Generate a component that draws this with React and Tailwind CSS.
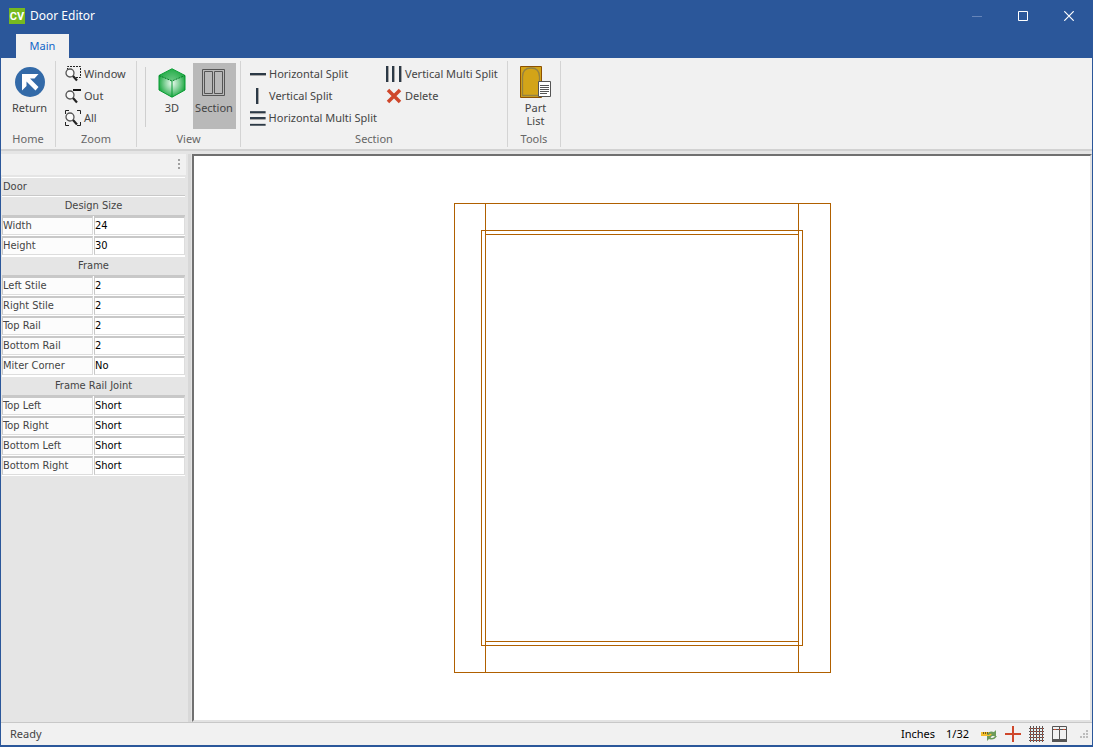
import React from "react";

const small = "flex h-[22px] items-center gap-[3px] whitespace-nowrap";

function Group({ name, className = "", children }) {
  return (
    <section aria-label={name} className={"flex flex-col border-r border-[#d4d4d4] " + className}>
      <div className="flex flex-1">{children}</div>
      <div className="h-4 text-center leading-4 text-[#666]">{name}</div>
    </section>
  );
}

function Glass({ kind }) {
  return (
    <svg width="16" height="16" viewBox="0 0 16 16" fill="none" aria-hidden="true">
      {kind === "window" && <path d="M2.500 4V.5H15.500V11.500H11" stroke="#222" strokeDasharray="2 1" />}
      {kind === "out" && <path d="M8 2H16" stroke="#111" strokeWidth="2" />}
      {kind === "all" && <path d="M.5 4V.5H4M12 .5H15.500V4M.5 12V15.500H4M12 15.500H15.500V12" stroke="#222" />}
      <circle cx="5" cy="7" r="4" fill="#fafafa" stroke="#555" strokeWidth="1.300" />
      <path d="M8 10L12 14.500" stroke="#222" strokeWidth="2.200" />
    </svg>
  );
}

function Bars({ kind }) {
  const h = kind === "h" ? [8] : [2, 8, 15];
  const v = kind === "v" ? [7] : [1, 7, 14];
  return (
    <svg width="16" height="16" viewBox="0 0 16 16" aria-hidden="true">
      {kind[0] === "h"
        ? h.map((y) => (
            <g key={y}>
              <rect x="0" y={y - 1} width="16" height="2" fill="#2c3946" />
              <rect x="0" y={y + 1} width="16" height="1" fill="#a5a5a5" />
            </g>
          ))
        : v.map((x) => (
            <g key={x}>
              <rect x={x - 1} y="0" width="2" height="16" fill="#2c3946" />
              <rect x={x + 1} y="0" width="1" height="16" fill="#a5a5a5" />
            </g>
          ))}
    </svg>
  );
}

function Heading({ children, first }) {
  return (
    <tr>
      <th
        colSpan="2"
        className={
          "border-t border-b border-t-white border-b-[#c8c8c8] bg-[#e5e5e5] p-0 font-normal text-[#444] " +
          (first ? "h-[19px] pl-px text-left" : "h-5 text-center")
        }
      >
        {children}
      </th>
    </tr>
  );
}

function Field({ label, value }) {
  const id = label.toLowerCase().replace(" ", "-");
  return (
    <tr>
      <td className="h-5 border-b border-white p-0">
        <label
          htmlFor={id}
          className="block h-[19px] border-t-2 border-r border-b border-l border-t-[#c8c8c8] border-r-[#ddd] border-b-[#ddd] border-l-[#c8c8c8] bg-[#fcfcfc] leading-4 whitespace-nowrap text-[#444]"
        >
          {label}
        </label>
      </td>
      <td className="h-5 border-b border-l border-white p-0">
        <input
          id={id}
          defaultValue={value}
          className="block h-[19px] w-full border-t-2 border-r border-b border-l border-t-[#c8c8c8] border-r-[#ddd] border-b-[#ddd] border-l-[#c8c8c8] bg-white pb-[2px] leading-[14px] text-black outline-none"
        />
      </td>
    </tr>
  );
}

export default function App() {
  return (
    <div className="flex h-screen flex-col border border-b-2 border-[#2b579a] bg-[#e5e5e5] font-['Noto_Sans',sans-serif] text-[11px] text-[#444]">
      <header className="shrink-0 bg-[#2b579a]">
        <div className="flex h-[33px] items-start text-white">
          <div className="flex h-[29px] flex-1 items-center gap-[5px] pl-2">
            <svg width="16" height="16" viewBox="0 0 16 16" aria-hidden="true">
              <rect width="16" height="16" fill="#77b91f" />
              <text x="8" y="12" fill="#fff" fontFamily="Roboto, sans-serif" fontWeight="700" fontSize="11" textAnchor="middle">CV</text>
            </svg>
            <h1 className="text-[12px]">Door Editor</h1>
          </div>
          <button aria-label="Minimize" className="flex h-[29px] w-[46px] items-center justify-center">
            <svg width="10" height="10"><path d="M0 5.500H10" stroke="#6685b9" /></svg>
          </button>
          <button aria-label="Maximize" className="flex h-[29px] w-[46px] items-center justify-center">
            <svg width="10" height="10"><path d="M.5 .5H9.500V9.500H.5Z" stroke="#fff" fill="none" /></svg>
          </button>
          <button aria-label="Close" className="flex h-[29px] w-[46px] items-center justify-center">
            <svg width="10" height="10"><path d="M.3 .3L9.700 9.700M9.700 .3L.3 9.700" stroke="#fff" strokeWidth="1.200" /></svg>
          </button>
        </div>
        <div role="tablist" className="flex h-6 pl-[15px]">
          <button role="tab" aria-selected="true" className="w-[53px] bg-[#f1f1f1] text-[#0f64c8]">
            Main
          </button>
        </div>
      </header>

      <div className="flex h-[93px] shrink-0 border-b-2 border-[#d2d2d2] bg-[#f1f1f1] pt-[3px] pb-[2px]">
        <Group name="Home" className="w-[55px]">
          <button className="flex w-full flex-col items-center pt-[6px] pl-[3px]">
            <svg width="30" height="30" viewBox="0 0 30 30" aria-hidden="true">
              <circle cx="15" cy="15" r="15" fill="#336aa8" />
              <path d="M7 7H23.500L19.500 11.500H15L23.500 20L20.500 23.500L11.500 14.500V19L7 23.500Z" fill="#fff" />
            </svg>
            <span className="mt-[3px] leading-[15px]">Return</span>
          </button>
        </Group>
        <Group name="Zoom" className="w-[81px]">
          <div className="flex flex-col pl-[9px] pt-[2px]">
            <button className={small}><Glass kind="window" />Window</button>
            <button className={small}><Glass kind="out" />Out</button>
            <button className={small}><Glass kind="all" />All</button>
          </div>
        </Group>
        <Group name="View" className="w-[104px]">
          <div className="mt-[6px] mb-1 ml-2 w-px bg-[#cfcfcf]" />
          <button className="ml-[5px] flex h-[66px] w-[42px] flex-col items-center pt-[5px] mt-[2px]">
            <svg width="28" height="30" viewBox="0 0 28 30" aria-hidden="true">
              <defs>
                <radialGradient id="cube" cx=".5" cy=".5" r=".55">
                  <stop offset="0" stopColor="#f0fbf3" />
                  <stop offset=".45" stopColor="#8fd6a3" />
                  <stop offset="1" stopColor="#12a338" />
                </radialGradient>
              </defs>
              <path d="M14 .8L27 7.500V22L14 29.200L1 22V7.500Z" fill="url(#cube)" stroke="#079b32" />
              <path d="M14 .8L27 7.500L14 13L1 7.500Z" fill="#26ad4a" fillOpacity=".6" />
              <path d="M1 7.500L14 13L27 7.500" fill="none" stroke="#087f2a" strokeDasharray="2 1" />
              <path d="M14 13V29" stroke="#079b32" />
            </svg>
            <span className="leading-[15px] mt-[2px]">3D</span>
          </button>
          <button className="mt-[2px] flex h-[66px] w-[43px] flex-col items-center bg-[#b9b9b9] pt-[5px] pr-px">
            <svg width="24" height="30" viewBox="0 0 24 30" fill="none" stroke="#555" aria-hidden="true">
              <path d="M.5 1.500H22.500V27.500H.5ZM2.500 3.500H10.500V25.500H2.500ZM12.500 3.500H20.500V25.500H12.500Z" />
            </svg>
            <span className="leading-[15px] mt-[2px]">Section</span>
          </button>
        </Group>
        <Group name="Section" className="w-[267px]">
          <div className="flex w-[136px] flex-col pl-[9px] pt-[2px]">
            <button className={small}><Bars kind="h" />Horizontal Split</button>
            <button className={small}><Bars kind="v" />Vertical Split</button>
            <button className={small}><Bars kind="hm" />Horizontal Multi Split</button>
          </div>
          <div className="flex flex-col pl-[9px] pt-[2px]">
            <button className={small}><Bars kind="vm" />Vertical Multi Split</button>
            <button className={small}>
              <svg width="16" height="16" viewBox="0 0 16 16" aria-hidden="true">
                <path d="M2 2L14 14M14 2L2 14" stroke="#cf472b" strokeWidth="3.500" />
              </svg>
              Delete
            </button>
          </div>
        </Group>
        <Group name="Tools" className="w-[53px]">
          <button className="flex w-full flex-col items-center pt-1 pl-[3px]">
            <svg width="32" height="34" viewBox="0 0 32 34" aria-hidden="true">
              <path d="M.5 1.500H21.500V32.500H.5Z" fill="#d3a418" stroke="#8d5000" />
              <path d="M2.500 30.500V12Q2.500 3 11 3Q19.500 3 19.500 12V30.500Z" fill="none" stroke="#938144" strokeWidth="1.300" />
              <path d="M18.500 16.500H30.500V31.500H18.500Z" fill="#fff" stroke="#555" />
              <path d="M20 20.500H29M20 22.500H29M20 24.500H29M20 26.500H29M20 28.500H27" stroke="#555" />
            </svg>
            <span className="mt-[2px] leading-[13px]">Part<br />List</span>
          </button>
        </Group>
      </div>

      <main className="flex min-h-0 flex-1 pt-[3px]">
        <aside className="w-[185px] shrink-0 font-['DejaVu_Sans_Condensed','Noto_Sans',sans-serif]">
          <div className="mb-[2px] flex h-[21px] justify-end bg-[#f1f1f1] pt-1 pr-[6px]">
            <svg width="2" height="12" aria-hidden="true" fill="#a0a0a0"><path d="M0 1H2V3H0ZM0 5H2V7H0ZM0 9H2V11H0Z" /></svg>
          </div>
          <table aria-label="Door properties" className="w-[183px] ml-px table-fixed border-separate border-spacing-0 leading-4">
            <colgroup><col className="w-[91px]" /><col /></colgroup>
            <tbody>
              <Heading first>Door</Heading>
              <Heading>Design Size</Heading>
              <Field label="Width" value="24" />
              <Field label="Height" value="30" />
              <Heading>Frame</Heading>
              <Field label="Left Stile" value="2" />
              <Field label="Right Stile" value="2" />
              <Field label="Top Rail" value="2" />
              <Field label="Bottom Rail" value="2" />
              <Field label="Miter Corner" value="No" />
              <Heading>Frame Rail Joint</Heading>
              <Field label="Top Left" value="Short" />
              <Field label="Top Right" value="Short" />
              <Field label="Bottom Left" value="Short" />
              <Field label="Bottom Right" value="Short" />
            </tbody>
          </table>
        </aside>
        <div className="mr-px ml-[2px] w-[3px] shrink-0 bg-[#d8d8d8]" />
        <div className="flex min-w-0 flex-1 items-center justify-center border-2 border-t-[#707070] border-r-[#e3e3e3] border-b-[#e3e3e3] border-l-[#707070] bg-white">
          <svg width="377" height="470" viewBox="0 0 377 470" fill="none" stroke="#b06000" shapeRendering="crispEdges" role="img" aria-label="Door section">
            <path d="M.5 .5H376.500V469.500H.5ZM31.500 .5V469.500M344.500 .5V469.500M27.500 27.500H348.500V442.500H27.500ZM31.500 31.500H344.500M31.500 438.500H344.500" />
          </svg>
        </div>
      </main>

      <footer className="flex h-[23px] shrink-0 items-center border-t border-[#c8c8c8] bg-[#f1f1f1] pr-1 pl-[9px]">
        <span className="flex-1">Ready</span>
        <span className="mr-[11px] text-black">Inches</span>
        <span className="mr-3 text-black">1/32</span>
        <svg width="16" height="16" viewBox="0 0 16 16" className="mr-2" aria-hidden="true">
          <path d="M0 6H15V10H0Z" fill="#f5be2d" />
          <path d="M2.500 6V8M4.500 6V8M6.500 6V8M8.500 6V8" stroke="#765a16" />
          <path d="M6 9Q8 4 13 6L15 4V10H9L11 8Q9 7 8 9ZM6 10H11L9.500 11.500Q12 13 14 10H16Q13 15 8 13L6 15Z" fill="#6c9b59" />
        </svg>
        <svg width="16" height="16" className="mr-2" aria-hidden="true"><path d="M8 0V16M0 8H16" stroke="#cf472b" strokeWidth="2" /></svg>
        <svg width="15" height="16" className="mr-2" stroke="#555" aria-hidden="true">
          <path d="M1.500 0V16M4.500 0V16M7.500 0V16M10.500 0V16M13.500 0V16M0 2.500H15M0 5.500H15M0 8.500H15M0 11.500H15M0 14.500H15" />
          <path d="M1 2.500H14M1 5.500H14M1 8.500H14M1 11.500H14M1 14.500H14" stroke="#cf472b" strokeDasharray="1 2" />
        </svg>
        <svg width="16" height="16" className="mr-3" fill="none" stroke="#555" aria-hidden="true">
          <path d="M.5 .5H14.500V15.500H.5ZM7.500 1V13M1 3.500H14" />
          <path d="M0 14.500H15" strokeWidth="3" />
          <path d="M2 3.500H4M7 3.500H8M11 3.500H13" stroke="#cf472b" />
        </svg>
        <svg width="8" height="8" fill="#bdbdbd" aria-hidden="true"><path d="M6 0H8V2H6ZM3 3H5V5H3ZM6 3H8V5H6ZM0 6H2V8H0ZM3 6H5V8H3ZM6 6H8V8H6Z" /></svg>
      </footer>
    </div>
  );
}
